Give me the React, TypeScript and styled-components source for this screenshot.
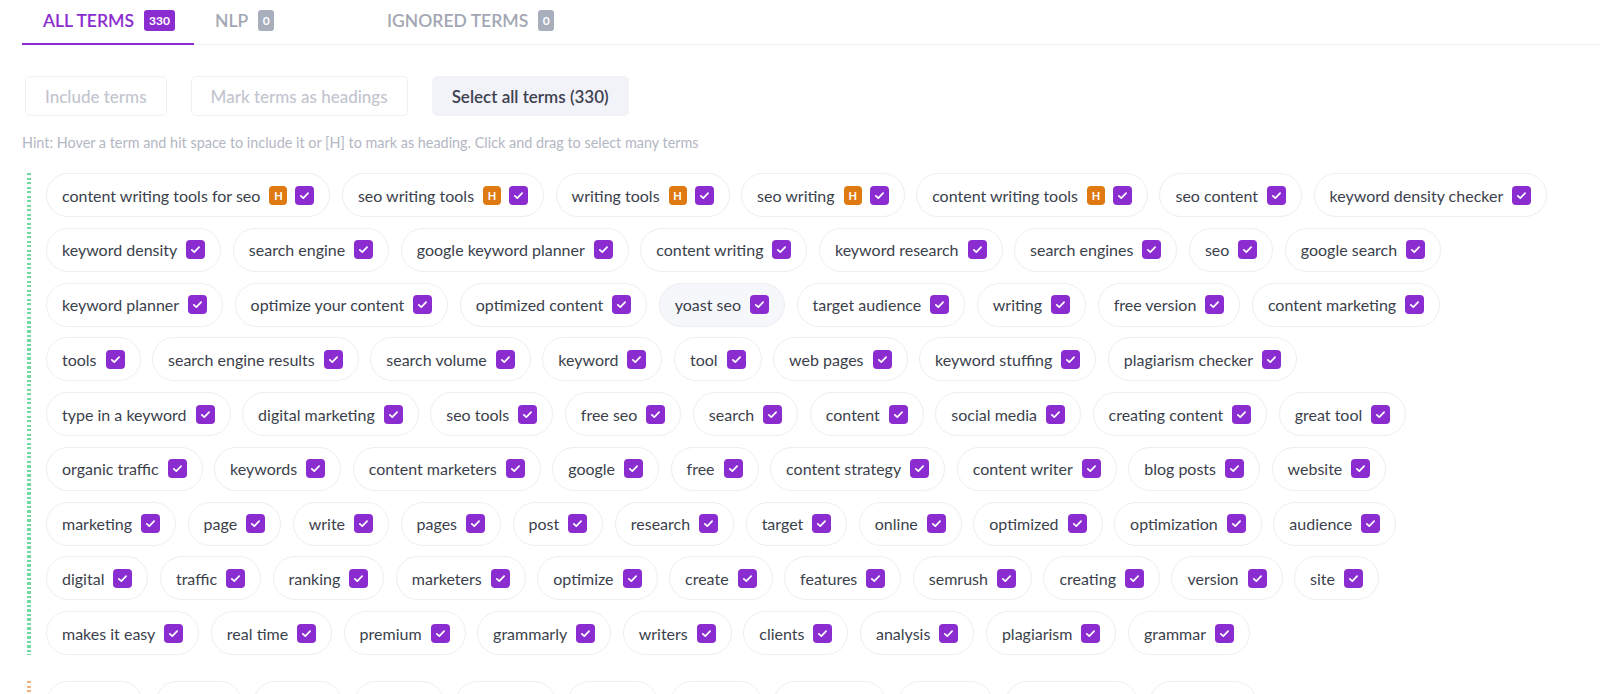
import React from 'react'
import styled, {createGlobalStyle} from 'styled-components'

const GlobalStyle = createGlobalStyle`
  html, body {
    margin: 0;
    padding: 0;
    background: #ffffff;
    font-family: Lato, "Open Sans", Arial, sans-serif;
    overflow: hidden;
  }
`

const Page = styled.div`
  width: 1600px;
  height: 694px;
  overflow: hidden;
  padding-left: 22px;
  box-sizing: border-box;
`

const TabBar = styled.div`
  display: flex;
  height: 44px;
  border-bottom: 1px solid #eceef2;
`

const Tab = styled.div<{active?: boolean}>`
  display: flex;
  align-items: center;
  gap: 10px;
  min-width: 172px;
  box-sizing: border-box;
  padding: 0 19px 2px 21px;
  font-size: 17.5px;
  font-weight: 600;
  color: ${p => (p.active ? '#8a2ccf' : '#a3a7b4')};
  border-bottom: 2px solid ${p => (p.active ? '#8a2ccf' : 'transparent')};
  margin-bottom: -1px;
`

const Badge = styled.span<{active?: boolean}>`
  display: inline-flex;
  align-items: center;
  justify-content: center;
  min-width: 16px;
  height: 21px;
  padding: 0 ${p => (p.active ? '5px' : '0')};
  border-radius: 3px;
  background: ${p => (p.active ? '#8a2ccf' : '#a9aebd')};
  color: #ffffff;
  font-size: 12px;
  font-weight: 700;
`

const Actions = styled.div`
  display: flex;
  gap: 24px;
  margin-top: 31px;
  padding-left: 3px;
`

const ActionButton = styled.button<{primary?: boolean}>`
  height: 40px;
  padding: 0 19px;
  border-radius: 5px;
  font-family: inherit;
  font-size: 17px;
  font-weight: ${p => (p.primary ? 600 : 500)};
  color: ${p => (p.primary ? '#3d4150' : '#c2c5ce')};
  background: ${p => (p.primary ? '#f2f3f8' : '#ffffff')};
  border: 1px solid ${p => (p.primary ? '#f2f3f8' : '#eef0f4')};
  cursor: pointer;
`

const Hint = styled.div`
  margin-top: 18px;
  font-size: 14.4px;
  line-height: 17px;
  color: #b3b7c3;
`

const Groups = styled.div`
  display: flex;
  flex-direction: column;
  gap: 26px;
  margin-top: 22px;
  padding-left: 5px;
`

const Group = styled.div`
  display: flex;
  gap: 15px;
`

const Marker = styled.div<{color: string}>`
  flex: 0 0 4px;
  background: repeating-linear-gradient(
    to bottom,
    ${p => p.color} 0 2px,
    transparent 2px 4.5px
  );
`

const Rows = styled.div`
  display: flex;
  flex-direction: column;
  gap: 10.75px;
`

const Row = styled.div`
  display: flex;
  gap: 11.5px;
`

const Chip = styled.div<{hover?: boolean}>`
  display: flex;
  align-items: center;
  gap: 9px;
  height: 44px;
  box-sizing: border-box;
  padding: 0 15px;
  border: 1px solid #eceef2;
  border-radius: 22px;
  background: ${p => (p.hover ? '#f6f7fb' : '#ffffff')};
  font-size: 16px;
  color: #3b3f4c;
  white-space: nowrap;
`

const Marks = styled.span`
  display: flex;
  gap: 8px;
`

const HeadingMark = styled.span`
  display: inline-flex;
  align-items: center;
  justify-content: center;
  width: 18px;
  height: 19px;
  border-radius: 4px;
  background: #df7a12;
  color: #ffffff;
  font-size: 11px;
  font-weight: 700;
`

const Check = () => (
  <svg width='19' height='19' viewBox='0 0 19 19'>
    <rect width='19' height='19' rx='4' fill='#8a2ccf'/>
    <path d='M5.8 9.8l2.5 2.4 4.8-5.1' fill='none' stroke='#fff' strokeWidth='1.7' strokeLinecap='round' strokeLinejoin='round'/>
  </svg>
)

type Term = {label: string; heading?: boolean; hover?: boolean}

const h = (label: string): Term => ({label, heading: true})
const t = (label: string): Term => ({label})

const included: Term[][] = [
  [h('content writing tools for seo'), h('seo writing tools'), h('writing tools'), h('seo writing'), h('content writing tools'), t('seo content'), t('keyword density checker')],
  [t('keyword density'), t('search engine'), t('google keyword planner'), t('content writing'), t('keyword research'), t('search engines'), t('seo'), t('google search')],
  [t('keyword planner'), t('optimize your content'), t('optimized content'), {label: 'yoast seo', hover: true}, t('target audience'), t('writing'), t('free version'), t('content marketing')],
  [t('tools'), t('search engine results'), t('search volume'), t('keyword'), t('tool'), t('web pages'), t('keyword stuffing'), t('plagiarism checker')],
  [t('type in a keyword'), t('digital marketing'), t('seo tools'), t('free seo'), t('search'), t('content'), t('social media'), t('creating content'), t('great tool')],
  [t('organic traffic'), t('keywords'), t('content marketers'), t('google'), t('free'), t('content strategy'), t('content writer'), t('blog posts'), t('website')],
  [t('marketing'), t('page'), t('write'), t('pages'), t('post'), t('research'), t('target'), t('online'), t('optimized'), t('optimization'), t('audience')],
  [t('digital'), t('traffic'), t('ranking'), t('marketers'), t('optimize'), t('create'), t('features'), t('semrush'), t('creating'), t('version'), t('site')],
  [t('makes it easy'), t('real time'), t('premium'), t('grammarly'), t('writers'), t('clients'), t('analysis'), t('plagiarism'), t('grammar')],
]

// next group, only its top edge shows in the frame
const others: Term[][] = [
  [t('blogs'), t('lists'), t('tags'), t('user'), t('rating'), t('rank'), t('sites'), t('authors'), t('topic'), t('readability'), t('quality')],
]

const TermChip = ({term}: {term: Term}) => (
  <Chip hover={term.hover}>
    {term.label}
    <Marks>
      {term.heading && <HeadingMark>{'H'}</HeadingMark>}
      <Check/>
    </Marks>
  </Chip>
)

const TermGroup = ({rows, color}: {rows: Term[][]; color: string}) => (
  <Group>
    <Marker color={color}/>
    <Rows>
      {rows.map((row, i) => (
        <Row key={i}>
          {row.map(term => <TermChip key={term.label} term={term}/>)}
        </Row>
      ))}
    </Rows>
  </Group>
)

const App = () => (
  <Page>
    <GlobalStyle/>
    <TabBar>
      <Tab active>{'ALL TERMS'}<Badge active>{'330'}</Badge></Tab>
      <Tab>{'NLP'}<Badge>{'0'}</Badge></Tab>
      <Tab>{'IGNORED TERMS'}<Badge>{'0'}</Badge></Tab>
    </TabBar>
    <Actions>
      <ActionButton>{'Include terms'}</ActionButton>
      <ActionButton>{'Mark terms as headings'}</ActionButton>
      <ActionButton primary>{'Select all terms (330)'}</ActionButton>
    </Actions>
    <Hint>{'Hint: Hover a term and hit space to include it or [H] to mark as heading. Click and drag to select many terms'}</Hint>
    <Groups>
      <TermGroup rows={included} color='#6fdba0'/>
      <TermGroup rows={others} color='#f1b07c'/>
    </Groups>
  </Page>
)

export default App
